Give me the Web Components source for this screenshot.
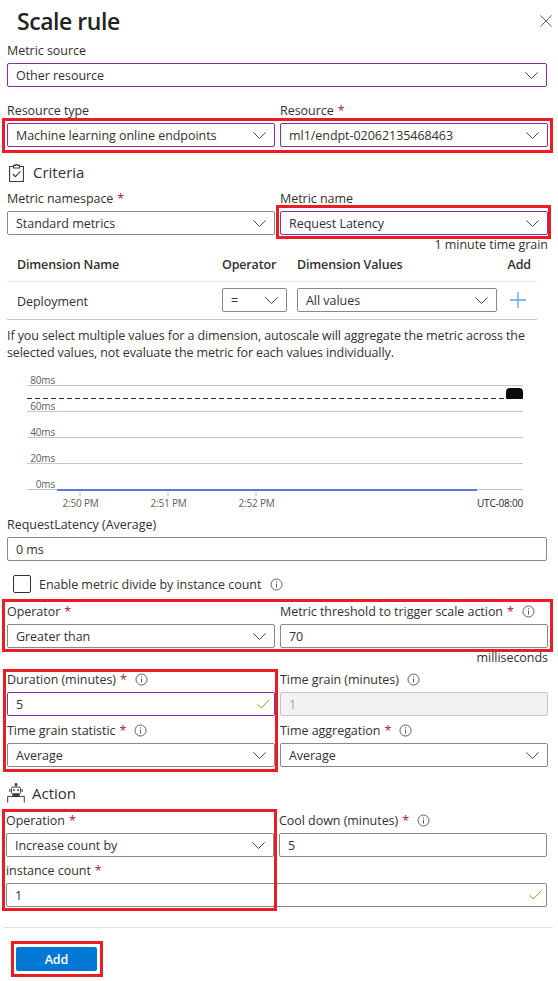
<!DOCTYPE html>
<html lang="en">
<head>
<meta charset="utf-8">
<title>Scale rule</title>
<style>
  html, body { margin: 0; background: #fff; }
  body { font-family: "Open Sans", "Noto Sans", sans-serif; color: #323130; overflow: hidden; }
</style>
</head>
<body>
<scale-panel>
  <h-box style="--x:2px;--y:118px;--w:551px;--h:35px"></h-box>
  <h-box style="--x:276px;--y:205px;--w:275px;--h:34px"></h-box>
  <h-box style="--x:2px;--y:599px;--w:551px;--h:53px"></h-box>
  <h-box style="--x:3px;--y:669px;--w:275px;--h:103px"></h-box>
  <h-box style="--x:2px;--y:809px;--w:275px;--h:102px"></h-box>
  <h-box style="--x:11px;--y:941px;--w:92px;--h:36px"></h-box>

  <page-title>Scale rule</page-title>

  <form-field label="Metric source"><drop-box accent>Other resource</drop-box></form-field>

  <form-row style="margin-top:15px">
    <form-field label="Resource type"><drop-box accent>Machine learning online endpoints</drop-box></form-field>
    <form-field label="Resource" required><drop-box accent>ml1/endpt-02062135468463</drop-box></form-field>
  </form-row>

  <section-title icon="criteria" style="margin-top:13px">Criteria</section-title>

  <form-row style="margin-top:6px">
    <form-field label="Metric namespace" required><drop-box>Standard metrics</drop-box></form-field>
    <form-field label="Metric name"><drop-box accent>Request Latency</drop-box></form-field>
  </form-row>
  <hint-text style="margin-top:2px">1 minute time grain</hint-text>

  <dimension-table></dimension-table>

  <metric-chart></metric-chart>

  <form-field label="RequestLatency (Average)"><text-box>0 ms</text-box></form-field>

  <check-line style="margin-top:14px">Enable metric divide by instance count</check-line>

  <form-row style="margin-top:10px">
    <form-field label="Operator" required><drop-box>Greater than</drop-box></form-field>
    <form-field label="Metric threshold to trigger scale action" required info><text-box>70</text-box></form-field>
  </form-row>
  <hint-text style="margin-top:2px">milliseconds</hint-text>

  <form-row style="margin-top:5px">
    <form-field label="Duration (minutes)" required info><text-box accent check>5</text-box></form-field>
    <form-field label="Time grain (minutes)" info><text-box disabled>1</text-box></form-field>
  </form-row>
  <form-row style="margin-top:6px">
    <form-field label="Time grain statistic" required info><drop-box>Average</drop-box></form-field>
    <form-field label="Time aggregation" required info><drop-box>Average</drop-box></form-field>
  </form-row>

  <section-title icon="action" style="margin-top:14px">Action</section-title>

  <form-row style="margin:7px 0 0 -1px">
    <form-field label="Operation" required><drop-box>Increase count by</drop-box></form-field>
    <form-field label="Cool down (minutes)" required info><text-box>5</text-box></form-field>
  </form-row>
  <form-field label="instance count" required style="margin:5px 0 0 -1px"><text-box check>1</text-box></form-field>

  <panel-footer>Add</panel-footer>
</scale-panel>

<script>
// Icons and shared text style
const FONT = `font-family:"Open Sans","Noto Sans",sans-serif;font-size:12.5px;letter-spacing:-.04px;`;
const INFO = `<svg width="13" height="13" viewBox="0 0 13 13" fill="none" stroke="#605e5c"><circle cx="6.5" cy="6.5" r="5.5"/><path d="M6.5 5.6v4"/><path d="M6.5 3.2v1.2"/></svg>`;
const CHEVRON = `<svg width="13" height="7" viewBox="0 0 13 7" fill="none" stroke="#484644"><path d="M.4.4 6.5 6.5 12.6.4"/></svg>`;
const CHECK = `<svg width="13" height="10" viewBox="0 0 13 10" fill="none" stroke="#6bb700"><path d="M.7 5.2 4.4 9 12.3.7"/></svg>`;
const ICONS = {
  criteria: `<svg width="15" height="19" viewBox="0 0 15 19" fill="none" stroke="#3b3a39" stroke-width="1.1"><path d="M4 3.5H.6v15h13.8v-15H11"/><path d="M4.5 5V2.4h2a1 1 0 0 1 2 0h2V5z"/><path d="M3.8 11l2.6 2.7 5-5.4"/></svg>`,
  action: `<svg width="18" height="20" viewBox="0 0 18 20" fill="none" stroke="#3b3a39"><circle cx="9" cy="1.4" r="1" fill="#3b3a39"/><path d="M9 2v2"/><rect x="4.5" y="4" width="9" height="7" rx="1.4"/><path d="M2.8 6v3M15.2 6v3"/><path d="M7 6.3v1.6M11 6.3v1.6" stroke-width="1.5"/><path d="M6 11h6v2.4H6z" fill="#3b3a39"/><path d="M.7 19.6v-6.2h16.6v6.2"/></svg>`
};

class PageTitle extends HTMLElement {
  constructor() { super(); this.attachShadow({ mode: "open" }); }
  connectedCallback() {
    this.shadowRoot.innerHTML = `
      <style>
        :host { display:flex; align-items:center; justify-content:space-between; height:42px; margin-right:-5px; padding-left:10px; }
        h1 { margin:0; font:600 23px/42px "Open Sans","Noto Sans",sans-serif; letter-spacing:-.45px; color:#252423; }
        svg { display:block; }
      </style>
      <h1><slot></slot></h1>
      <svg width="12" height="12" viewBox="0 0 12 12" stroke="#605e5c" fill="none"><path d="M.4.4l11.2 11.2M11.6.4.4 11.6"/></svg>`;
  }
}

class FormRow extends HTMLElement {
  constructor() { super(); this.attachShadow({ mode: "open" }); }
  connectedCallback() {
    this.shadowRoot.innerHTML = `
      <style>:host { display:grid; grid-template-columns:268px 268px; column-gap:5px; }</style>
      <slot></slot>`;
  }
}

class FormField extends HTMLElement {
  constructor() { super(); this.attachShadow({ mode: "open" }); }
  connectedCallback() {
    const star = this.hasAttribute("required") ? `<span class="req">*</span>` : "";
    const info = this.hasAttribute("info") ? `<span class="info">${INFO}</span>` : "";
    this.shadowRoot.innerHTML = `
      <style>
        :host { display:block; }
        label { display:flex; align-items:center; height:17px; margin-bottom:4px; white-space:nowrap; ${FONT} color:#323130; }
        .req { color:#a4262c; margin-left:4px; }
        .info { display:flex; margin-left:8px; }
      </style>
      <label>${this.getAttribute("label")}${star}${info}</label>
      <slot></slot>`;
  }
}

class DropBox extends HTMLElement {
  constructor() { super(); this.attachShadow({ mode: "open" }); }
  connectedCallback() {
    this.shadowRoot.innerHTML = `
      <style>
        :host { display:flex; align-items:center; justify-content:space-between; box-sizing:border-box; height:24px; padding:0 8px; background:#fff;
          border:1px solid #8a8886; border-radius:2px; ${FONT} color:#323130; white-space:nowrap; }
        :host([accent]) { border-color:#8a2da5; }
        svg { display:block; flex:none; }
      </style>
      <span><slot></slot></span>${CHEVRON}`;
  }
}

class TextBox extends HTMLElement {
  constructor() { super(); this.attachShadow({ mode: "open" }); }
  connectedCallback() {
    const check = this.hasAttribute("check") ? CHECK : "";
    this.shadowRoot.innerHTML = `
      <style>
        :host { display:flex; align-items:center; justify-content:space-between; box-sizing:border-box; height:24px; padding:0 4px 0 8px; background:#fff;
          border:1px solid #8a8886; border-radius:2px; ${FONT} color:#323130; }
        :host([accent]) { border-color:#8a2da5; }
        :host([disabled]) { background:#f3f2f1; border-color:#c8c6c4; color:#a19f9d; }
        svg { display:block; }
      </style>
      <span><slot></slot></span>${check}`;
  }
}

class SectionTitle extends HTMLElement {
  constructor() { super(); this.attachShadow({ mode: "open" }); }
  connectedCallback() {
    this.shadowRoot.innerHTML = `
      <style>
        :host { display:flex; align-items:center; height:24px; ${FONT} font-size:15px; letter-spacing:0; color:#323130; }
        .ic { width:25px; display:flex; justify-content:flex-start; box-sizing:border-box; }
        :host([icon="criteria"]) .ic { width:26px; padding-left:2px; }
        svg { display:block; }
      </style>
      <span class="ic">${ICONS[this.getAttribute("icon")]}</span><slot></slot>`;
  }
}

class HintText extends HTMLElement {
  constructor() { super(); this.attachShadow({ mode: "open" }); }
  connectedCallback() {
    this.shadowRoot.innerHTML = `
      <style>:host { display:block; height:16px; margin-right:-1px; line-height:16px; text-align:right; ${FONT} color:#323130; }</style>
      <slot></slot>`;
  }
}

class DimensionTable extends HTMLElement {
  constructor() { super(); this.attachShadow({ mode: "open" }); }
  connectedCallback() {
    this.shadowRoot.innerHTML = `
      <style>
        :host { display:block; width:530px; margin-top:1px; ${FONT} color:#323130; }
        .row { display:grid; grid-template-columns:205px 65px 10px 200px 1fr; padding-left:10px; box-sizing:border-box; align-items:center; }
        .head { height:28px; font-weight:600; letter-spacing:-.15px; white-space:nowrap; border-bottom:1px solid #edebe9; padding-bottom:6px; }
        .body { height:38px; border-bottom:1px solid #c8c6c4; padding-bottom:1px; }
        .name { padding-top:2px; }
        .add { text-align:right; padding-right:6px; }
        .plus { display:flex; justify-content:flex-end; padding-right:11px; }
        p { margin:7px 0 0; width:540px; line-height:17px; letter-spacing:-.1px; }
        svg { display:block; }
      </style>
      <div class="row head"><span>Dimension Name</span><span>Operator</span><span></span><span>Dimension Values</span><span class="add">Add</span></div>
      <div class="row body">
        <span class="name">Deployment</span><drop-box>=</drop-box><span></span><drop-box>All values</drop-box>
        <span class="plus"><svg width="16" height="16" viewBox="0 0 16 16" stroke="#5aa7e5" stroke-width="1.3"><path d="M8 0v16M0 8h16"/></svg></span>
      </div>
      <p>If you select multiple values for a dimension, autoscale will aggregate the metric across the selected values, not evaluate the metric for each values individually.</p>`;
  }
}

class MetricChart extends HTMLElement {
  constructor() { super(); this.attachShadow({ mode: "open" }); }
  connectedCallback() {
    // La posición dentro del SVG es el contenido del gráfico
    const y0 = 361;
    const grid = [["80ms", 385], ["60ms", 411], ["40ms", 437], ["20ms", 463], ["0ms", 489]].map(([t, y]) =>
      `<path d="M27 ${y - y0 + .5}H523" stroke="#c8c6c4"/><text x="55" y="${y - y0 - 1}" text-anchor="end">${t}</text>`).join("");
    const ticks = [["2:50 PM", 80], ["2:51 PM", 168], ["2:52 PM", 256]].map(([t, x]) =>
      `<path d="M${x} ${489 - y0}v7" stroke="#c8c6c4"/><text x="${x + .5}" y="${507 - y0}" text-anchor="middle">${t}</text>`).join("");
    this.shadowRoot.innerHTML = `
      <style>
        :host { display:block; height:155px; margin-left:-7px; }
        svg { display:block; }
        text { font:10px "Open Sans","Noto Sans",sans-serif; letter-spacing:-.2px; fill:#605e5c; }
      </style>
      <svg width="558" height="155" viewBox="0 0 558 155">
        ${grid}${ticks}
        <path d="M27 37.5H506" stroke="#323130" stroke-dasharray="5 3" fill="none"/>
        <path d="M57 129H477" stroke="#5b78e5" stroke-width="2"/>
        <path d="M506 31q0-4 4-4h9q4 0 4 4v6q0 1-1 1h-15q-1 0-1-1z" fill="#0b0b0b"/>
        <text x="523" y="${507 - y0}" text-anchor="end" style="fill:#252423">UTC-08:00</text>
      </svg>`;
  }
}

class CheckLine extends HTMLElement {
  constructor() { super(); this.attachShadow({ mode: "open" }); }
  connectedCallback() {
    this.shadowRoot.innerHTML = `
      <style>
        :host { display:flex; align-items:center; height:18px; padding-left:6px; ${FONT} color:#323130; }
        .box { box-sizing:border-box; width:18px; height:18px; border:1px solid #323130; border-radius:2px; margin-right:8px; background:#fff; }
        .info { display:flex; margin-left:9px; }
      </style>
      <span class="box"></span><slot></slot><span class="info">${INFO}</span>`;
  }
}

class PanelFooter extends HTMLElement {
  constructor() { super(); this.attachShadow({ mode: "open" }); }
  connectedCallback() {
    this.shadowRoot.innerHTML = `
      <style>
        :host { display:block; margin:20px 0 0 -3px; width:549px; border-top:1px solid #e1dfdd; padding:19px 0 0 12px; box-sizing:border-box; }
        button { display:block; width:81px; height:24px; padding:0; border:0; border-radius:2px; background:#0078d4; color:#fff; ${FONT} font-weight:600; }
      </style>
      <button><slot></slot></button>`;
  }
}

// Recuadro rojo de anotación, va encima del formulario
class HBox extends HTMLElement {
  constructor() { super(); this.attachShadow({ mode: "open" }); }
  connectedCallback() {
    this.shadowRoot.innerHTML = `
      <style>
        :host { position:absolute; left:var(--x); top:var(--y); width:var(--w); height:var(--h); box-sizing:border-box; border:3px solid #ed1c24; pointer-events:none; z-index:2; }
      </style>`;
  }
}

class ScalePanel extends HTMLElement {
  constructor() { super(); this.attachShadow({ mode: "open" }); }
  connectedCallback() {
    this.shadowRoot.innerHTML = `
      <style>
        :host { display:block; position:relative; box-sizing:border-box; width:558px; height:981px; padding:0 11px 0 7px; overflow:hidden; background:#fff; }
      </style>
      <slot></slot>`;
  }
}

customElements.define("page-title", PageTitle);
customElements.define("form-row", FormRow);
customElements.define("form-field", FormField);
customElements.define("drop-box", DropBox);
customElements.define("text-box", TextBox);
customElements.define("section-title", SectionTitle);
customElements.define("hint-text", HintText);
customElements.define("dimension-table", DimensionTable);
customElements.define("metric-chart", MetricChart);
customElements.define("check-line", CheckLine);
customElements.define("panel-footer", PanelFooter);
customElements.define("h-box", HBox);
customElements.define("scale-panel", ScalePanel);
</script>
</body>
</html>
